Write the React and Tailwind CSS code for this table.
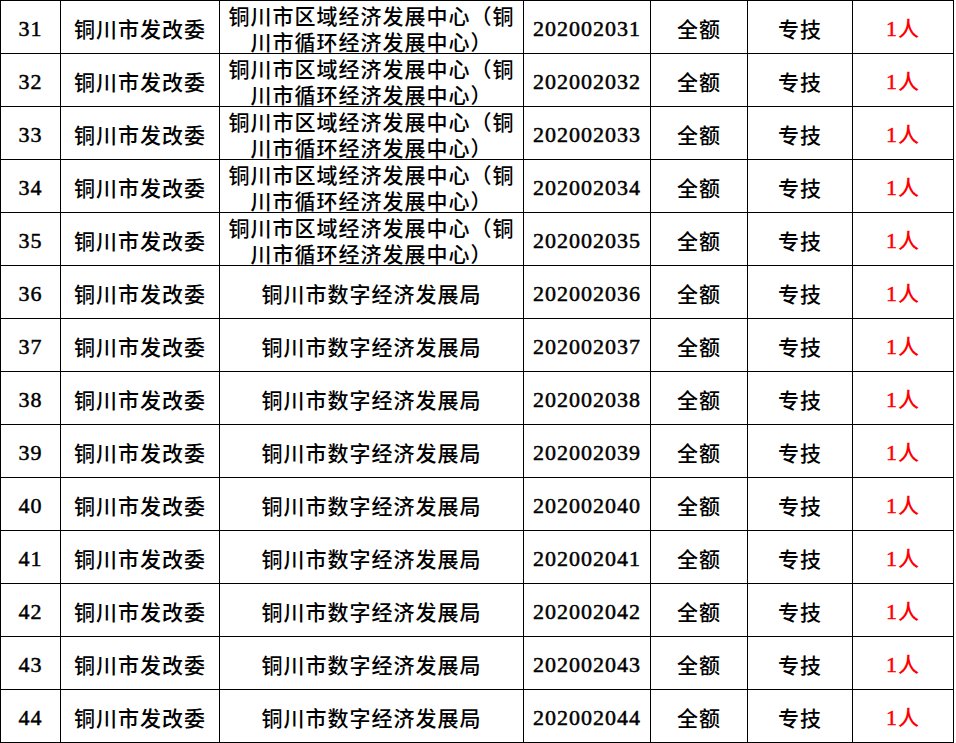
const rows = [
  { no: 31, unit: 'long', code: '202002031' },
  { no: 32, unit: 'long', code: '202002032' },
  { no: 33, unit: 'long', code: '202002033' },
  { no: 34, unit: 'long', code: '202002034' },
  { no: 35, unit: 'long', code: '202002035' },
  { no: 36, unit: 'short', code: '202002036' },
  { no: 37, unit: 'short', code: '202002037' },
  { no: 38, unit: 'short', code: '202002038' },
  { no: 39, unit: 'short', code: '202002039' },
  { no: 40, unit: 'short', code: '202002040' },
  { no: 41, unit: 'short', code: '202002041' },
  { no: 42, unit: 'short', code: '202002042' },
  { no: 43, unit: 'short', code: '202002043' },
  { no: 44, unit: 'short', code: '202002044' },
];

const cell = 'flex items-center justify-center border-r border-b border-black text-center';
const serif = { fontFamily: '"Liberation Serif", serif' };

export default function App() {
  return (
    <div
      className="w-[956px] h-[743px] bg-white text-black text-[21px] font-medium tracking-[1px]"
      style={{ fontFamily: '"Noto Sans CJK SC", "Liberation Serif", serif' }}
    >
      <div className="grid grid-cols-[60px_159px_304px_127px_97px_105px_101px] auto-rows-[53px] w-[954px] border-l border-t border-black">
        {rows.map((r) => (
          <div key={r.no} className="contents">
            <div className={cell + ' pt-[3px]'} style={serif}>
              <span className="text-[22px] font-normal tracking-[1px] [-webkit-text-stroke:0.5px_black]">{r.no}</span>
            </div>
            <div className={cell + ' pt-[3px]'}>铜川市发改委</div>
            {r.unit === 'long' ? (
              <div className={cell + ' pt-[1px] leading-[26px]'}>
                <span>
                  铜川市区域经济发展中心（铜
                  <br />
                  川市循环经济发展中心）
                </span>
              </div>
            ) : (
              <div className={cell + ' pt-[3px]'}>
                <span>铜川市数字经济发展局</span>
              </div>
            )}
            <div className={cell + ' pt-[3px]'} style={serif}>
              <span className="text-[22px] font-normal tracking-[1px] [-webkit-text-stroke:0.5px_black]">{r.code}</span>
            </div>
            <div className={cell + ' pt-[3px]'}>全额</div>
            <div className={cell + ' pt-[3px]'}>专技</div>
            <div className={cell + ' pt-[3px] text-[#ff0000]'}>
              <span>
                <span className="text-[22px] font-normal [-webkit-text-stroke:0.5px_#ff0000]" style={serif}>1</span>人
              </span>
            </div>
          </div>
        ))}
      </div>
    </div>
  );
}
